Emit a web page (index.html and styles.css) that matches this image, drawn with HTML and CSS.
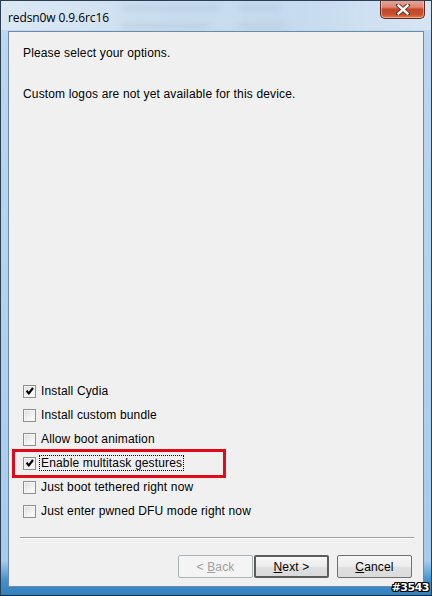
FILE: index.html
```html
<!DOCTYPE html>
<html lang="en">
<head>
    <meta charset="UTF-8">
    <meta name="viewport" content="width=device-width, initial-scale=1.0">
    <title>redsn0w 0.9.6rc16</title>
    <link rel="stylesheet" href="styles.css">
</head>
<body>
    <div class="window">
        <div class="titlebar">
            <span class="blur b1"></span>
            <span class="blur b2"></span>
            <span class="blur b3"></span>
            <span class="blur b4"></span>
            <span class="title">redsn0w 0.9.6rc16</span>
            <div class="close">
                <svg width="14" height="11" viewBox="0 0 14 11">
                    <path d="M2 1 L12 10 M12 1 L2 10" stroke="#6b2a1c" stroke-width="4.2" stroke-linecap="square"/>
                    <path d="M2.5 1.5 L11.5 9.5 M11.5 1.5 L2.5 9.5" stroke="#fff" stroke-width="2.4" stroke-linecap="square"/>
                </svg>
            </div>
        </div>

        <div class="content">
            <p class="intro">Please select your options.</p>
            <p class="note">Custom logos are not yet available for this device.</p>

            <div class="spacer"></div>

            <!-- opcje -->
            <div class="options">
                <label class="option"><span class="box checked"></span><span class="text">Install Cydia</span></label>
                <label class="option"><span class="box"></span><span class="text">Install custom bundle</span></label>
                <label class="option"><span class="box"></span><span class="text">Allow boot animation</span></label>
                <label class="option"><span class="box checked"></span><span class="text focus">Enable multitask gestures</span></label>
                <label class="option"><span class="box"></span><span class="text">Just boot tethered right now</span></label>
                <label class="option"><span class="box"></span><span class="text">Just enter pwned DFU mode right now</span></label>
            </div>

            <div class="separator"></div>

            <div class="buttons">
                <button class="btn disabled">&lt; <u>B</u>ack</button>
                <button class="btn default"><u>N</u>ext &gt;</button>
                <button class="btn cancel"><u>C</u>ancel</button>
            </div>

            <div class="highlight"></div>
        </div>

        <div class="watermark">#3543</div>
    </div>
</body>
</html>
```

FILE: styles.css
```css
body {
    margin: 0;
    background: #fff;
}
.window {
    position: relative;
    width: 432px;
    height: 596px;
    box-sizing: border-box;
    border: 1px solid #2d3e52;
    border-bottom-color: #1d2a38;
    background: linear-gradient(to bottom, #cddff0 0, #bcd6ee 40px, #b2d2ee 300px, #a6cbec 560px, #3e8fca 580px, #2f7fbd 596px);
    display: flex;
    flex-direction: column;
    overflow: hidden;
}
.titlebar {
    position: relative;
    height: 29px;
    flex: none;
    background: linear-gradient(to right, #dbe8f4 0, #cadef0 40%, #c6dbef 70%, #d6e5f3 100%);
}
.blur {
    position: absolute;
    height: 8px;
    border-radius: 4px;
    background: #b4c8dc;
    filter: blur(3px);
    opacity: 0.5;
}
.b1 { left: 120px; top: 3px; width: 100px; }
.b2 { left: 236px; top: 3px; width: 44px; }
.b3 { left: 120px; top: 21px; width: 90px; }
.b4 { left: 236px; top: 21px; width: 50px; }
.title {
    position: absolute;
    left: 7px;
    top: 8px;
    font-family: "Open Sans", "Noto Sans", sans-serif;
    font-size: 12px;
    color: #000;
    letter-spacing: -0.1px;
}
.close {
    position: absolute;
    right: 6px;
    top: -1px;
    width: 45px;
    height: 19px;
    box-sizing: border-box;
    border: 1px solid #5b2a20;
    border-top: none;
    border-radius: 0 0 5px 5px;
    background: linear-gradient(to bottom, #e9a897 0, #dc8571 40%, #c4452a 52%, #c9502e 80%, #e07a4b 100%);
    box-shadow: inset 0 0 0 1px rgba(255, 220, 200, 0.5);
    display: flex;
    align-items: center;
    justify-content: center;
}
.content {
    position: relative;
    flex: none;
    margin: 1px 7px 0 7px;
    height: 556px;
    box-sizing: border-box;
    border: 1px solid #6d8aa6;
    background: #f0f0f0;
    display: flex;
    flex-direction: column;
    font-family: "Liberation Sans", Arial, sans-serif;
    font-size: 12px;
    letter-spacing: 0.15px;
    color: #000;
}
.intro, .note {
    margin: 0;
    padding-left: 14px;
    line-height: 14px;
}
.intro {
    margin-top: 14px;
}
.note {
    margin-top: 27px;
}
.spacer {
    flex: 1;
}
.options {
    display: flex;
    flex-direction: column;
    padding-left: 14px;
}
.option {
    display: flex;
    align-items: center;
    height: 24px;
}
.box {
    width: 13px;
    height: 13px;
    box-sizing: border-box;
    border: 1px solid #8f8f8f;
    background: linear-gradient(135deg, #dcdcdc 0, #f4f4f4 60%, #fff 100%);
    box-shadow: inset 0 0 0 1px #f4f4f4;
    margin-right: 3px;
    position: relative;
}
.box.checked::after {
    content: "";
    position: absolute;
    left: 2px;
    top: 1px;
    width: 8px;
    height: 8px;
    background: url("data:image/svg+xml;utf8,<svg xmlns='http://www.w3.org/2000/svg' width='8' height='8'><path d='M0.6 3.8 L2.8 6.4 L7 1' fill='none' stroke='%23000' stroke-width='2.1'/></svg>") no-repeat;
}
.text {
    padding: 0 1px;
    line-height: 14px;
    border: 1px dotted transparent;
}
.text.focus {
    border-color: #000;
}
.separator {
    margin: 14px 9px 0 11px;
    height: 1px;
    background: #a0a0a0;
    border-bottom: 1px solid #fff;
}
.buttons {
    display: flex;
    justify-content: flex-end;
    padding: 16px 11px 8px 0;
}
.btn {
    width: 75px;
    height: 23px;
    box-sizing: border-box;
    font-family: "Liberation Sans", Arial, sans-serif;
    font-size: 12px;
    letter-spacing: 0.15px;
    color: #000;
    border: 1px solid #707070;
    border-radius: 2px;
    background: linear-gradient(to bottom, #f6f6f6 0, #ececec 50%, #e0e0e0 51%, #dadada 100%);
    padding: 0;
}
.btn.disabled {
    color: #a0a0a0;
    border-color: #adb2b5;
    background: #f4f4f4;
}
.btn.default {
    border: 2px solid #5c5c5c;
    margin-left: 1px;
    margin-right: 8px;
}
.highlight {
    position: absolute;
    left: 3px;
    top: 417px;
    width: 214px;
    height: 29px;
    box-sizing: border-box;
    border: 3px solid #e20a16;
}
.watermark {
    position: absolute;
    right: 2px;
    bottom: 1px;
    font-family: "DejaVu Sans", sans-serif;
    font-weight: bold;
    font-size: 11px;
    letter-spacing: -0.5px;
    color: #fff;
    text-shadow: 1px 0 0 #000, -1px 0 0 #000, 0 1px 0 #000, 0 -1px 0 #000, 1px 1px 0 #000, -1px -1px 0 #000, 1px -1px 0 #000, -1px 1px 0 #000;
}
```
